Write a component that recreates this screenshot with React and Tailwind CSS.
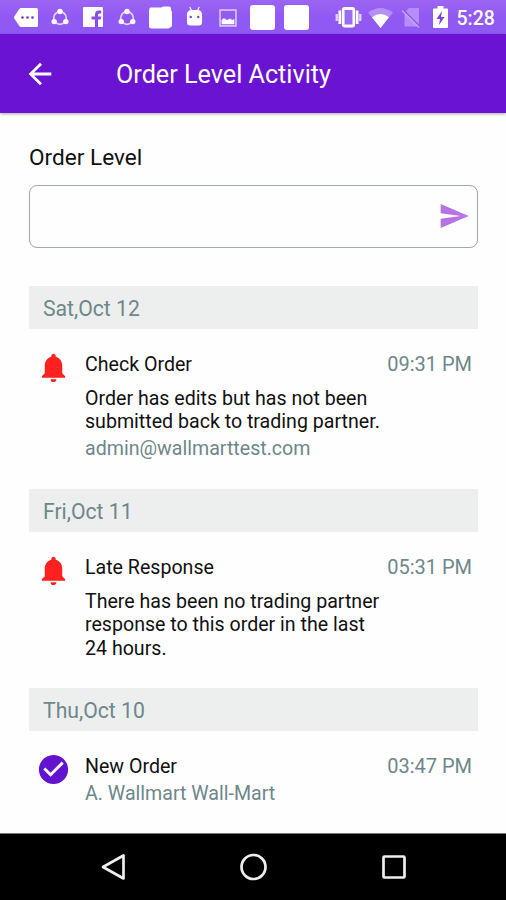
import React from 'react';
import { MdArrowBack, MdCheckCircle, MdNotifications, MdSend } from 'react-icons/md';

const days = [
  {
    date: 'Sat,Oct 12',
    height: 'h-[203px]',
    icon: 'bell',
    title: 'Check Order',
    time: '09:31 PM',
    message: ['Order has edits but has not been', 'submitted back to trading partner.'],
    author: 'admin@wallmarttest.com',
  },
  {
    date: 'Fri,Oct 11',
    height: 'h-[199px]',
    icon: 'bell',
    title: 'Late Response',
    time: '05:31 PM',
    message: ['There has been no trading partner', 'response to this order in the last', '24 hours.'],
  },
  {
    date: 'Thu,Oct 10',
    height: 'h-[145px]',
    icon: 'check',
    title: 'New Order',
    time: '03:47 PM',
    author: 'A. Wallmart Wall-Mart',
  },
];

function ShareRing({ className }) {
  return (
    <svg className={className} width="18" height="19" viewBox="0 0 18 19" fill="none">
      <circle cx="9" cy="10" r="6.3" stroke="#e3d3fc" strokeWidth="1.700" />
      <circle cx="9" cy="3.5" r="2.700" fill="#fff" />
      <circle cx="3.2" cy="13.6" r="2.700" fill="#fff" />
      <circle cx="14.8" cy="13.6" r="2.700" fill="#fff" />
    </svg>
  );
}

function StatusBar() {
  return (
    <div className="flex h-[34px] shrink-0 items-start bg-linear-to-b from-[#9c64f2] via-[#9159f3] to-[#9159f3] pt-1 text-white">
      {/* Notifications */}
      <svg className="mt-1 ml-3.5" width="24" height="19" viewBox="0 0 24 19">
        <path d="M7 0h15.500q1.500 0 1.500 1.500v16q0 1.500-1.500 1.500H7q-1 0-1.700-1L.3 10.500q-.5-1 0-2L5.300 1Q6 0 7 0z" fill="#fff" />
        <g fill="#6f35c9">
          <circle cx="8.500" cy="9.500" r="1.300" />
          <circle cx="13.500" cy="9.500" r="1.300" />
          <circle cx="18.500" cy="9.500" r="1.300" />
        </g>
      </svg>
      <ShareRing className="mt-1 ml-[13px]" />
      <svg className="mt-[3px] ml-[14px]" width="20" height="20" viewBox="0 0 20 20">
        <rect width="20" height="20" rx="1" fill="#fff" />
        <path d="M12 20v-7.500H8.500v-3H12V7.500Q12 3.500 16 3.500h2.200v3H16.500q-1.500 0-1.500 1.500v1.500h3.200l-.5 3H15V20z" fill="#8a4fe6" />
      </svg>
      <ShareRing className="mt-1 ml-[15px]" />
      <svg className="mt-0.5 ml-3" width="25" height="23" viewBox="0 0 25 23">
        <path d="M2.500 1.500h11l1.500-1h6q2 0 2 2v2q1 0 1 2v13q0 2-2 2l-1.500 1h-17q-2.500 0-2.500-2.500v-14q0-4.500 1.500-4.500z" fill="#fff" />
      </svg>
      <svg className="mt-0.5 ml-[13px]" width="17" height="20" viewBox="0 0 18 20" preserveAspectRatio="none">
        <path d="M4 1l2 4M14 1l-2 4" stroke="#fff" strokeWidth="1.300" />
        <path d="M1 9q0-5 5-5h6q5 0 5 5v7q0 3.500-3.500 3.500h-9Q1 19.500 1 16z" fill="#fff" />
        <circle cx="5" cy="11" r="1.300" fill="#7a43d4" />
        <circle cx="13" cy="11" r="1.300" fill="#7a43d4" />
      </svg>
      <svg className="mt-[5px] ml-4" width="18" height="18" viewBox="0 0 17 17">
        <rect x="1" y="1" width="15" height="15" fill="none" stroke="#d9c4fb" strokeWidth="1.600" />
        <path d="M2.500 14.500v-4l2-2 3 2 3-1.500 2 1.500 2-1v5z" fill="#fff" />
      </svg>
      <span className="mt-px ml-[13px] h-[25px] w-[25px] rounded-[3px] bg-white" />
      <span className="mt-px ml-[8.500px] h-[25px] w-[25px] rounded-[3px] bg-white" />

      {/* Device state */}
      <svg className="mt-[3px] ml-[26px]" width="27" height="21" viewBox="0 0 28 21" preserveAspectRatio="none">
        <rect x="8.500" y="1.500" width="11" height="17.500" rx="1.500" fill="#9c6bf3" stroke="#fff" strokeWidth="2.800" />
        <path d="M5 3.500v13.500M23 3.500v13.500" stroke="#fff" strokeWidth="2.800" />
        <path d="M1.800 7v7M26.200 7v7" stroke="#e3d3fc" strokeWidth="2.400" />
      </svg>
      <svg className="mt-1 ml-[6px]" width="25" height="20" viewBox="0 0 25 20">
        <path d="M12.500 20L0 4.500Q12.500-4.500 25 4.500z" fill="#b48ff7" />
        <path d="M12.500 20L4 9.300q8.500-6.600 17 0z" fill="#fff" />
      </svg>
      <svg className="mt-1 ml-[9px]" width="19" height="20" viewBox="0 0 19 20">
        <path d="M7 0h10v18.500H2.500V5z" fill="#b48ff7" />
        <path d="M1 1.500L18 18.500" stroke="#8f57e8" strokeWidth="1.600" />
        <path d="M0 2.500L17 19.500" stroke="#c5a8f8" strokeWidth="1.200" />
      </svg>
      <svg className="mt-0.5 ml-3" width="15" height="22" viewBox="0 0 15 22">
        <path d="M4.500 0h6v2.500H14q1 0 1 1V21q0 1-1 1H1q-1 0-1-1V3.500q0-1 1-1h3.500z" fill="#fff" />
        <path d="M9 5l-5.500 8H7l-1 6 5.500-8H8z" fill="#7d43db" />
      </svg>
      <span className="mt-0.5 ml-[9px] text-[19.500px] leading-[26px] font-medium">5:28</span>
    </div>
  );
}

function EventIcon({ type }) {
  if (type === 'check') {
    return <MdCheckCircle className="mt-[21px] ml-[7px] h-[35px] w-[35px] text-[#6312cf]" />;
  }
  return <MdNotifications className="mt-[21px] ml-[7px] h-[35px] w-[35px] text-[#ff2020]" />;
}

function Day({ day }) {
  return (
    <section className={day.height}>
      <h2 className="h-[43px] bg-[#edefee] pl-3.5 text-[21.200px] leading-[45px] text-[#6d878a]">{day.date}</h2>
      <div className="flex">
        <div className="w-14 shrink-0">
          <EventIcon type={day.icon} />
        </div>
        <div className="min-w-0 grow pt-[22px] pr-[6px] text-[19.600px]">
          <div className="flex justify-between leading-[27px]">
            <h3>{day.title}</h3>
            <span className="text-[20px] text-[#6d878a]">{day.time}</span>
          </div>
          {day.message && (
            <p className="pt-[9px] pb-px leading-[23.300px] whitespace-nowrap">
              {day.message.map((line) => (
                <span key={line} className="block">{line}</span>
              ))}
            </p>
          )}
          {day.author && <p className="leading-7 text-[#6d878a]">{day.author}</p>}
        </div>
      </div>
    </section>
  );
}

function NavigationBar() {
  return (
    <nav className="flex h-[67px] shrink-0 items-center border-t border-[#777] bg-black">
      <svg className="ml-[100px]" width="27" height="28" viewBox="0 0 27 28" fill="none">
        <path d="M23.500 2.500v23L3 14z" stroke="#eee" strokeWidth="2.700" strokeLinejoin="round" />
      </svg>
      <svg className="ml-[112px]" width="28" height="28" viewBox="0 0 28 28" fill="none">
        <circle cx="14.500" cy="14" r="12" stroke="#eee" strokeWidth="2.700" />
      </svg>
      <svg className="ml-[114px]" width="26" height="26" viewBox="0 0 26 26" fill="none">
        <rect x="2.500" y="2.500" width="21" height="21" rx="1" stroke="#eee" strokeWidth="2.700" />
      </svg>
    </nav>
  );
}

function App() {
  return (
    <div className="flex h-[900px] w-[506px] flex-col overflow-hidden bg-[#fefefe] font-['Roboto',sans-serif] text-[#111]">
      <StatusBar />
      <header className="flex h-[79px] shrink-0 items-center bg-[#6a13d3] text-white shadow-[0_1px_3px_rgba(0,0,0,0.35)]">
        <MdArrowBack className="ml-[23px] h-[34px] w-[34px]" />
        <h1 className="ml-[59px] pt-[3px] text-[25.200px] leading-8">Order Level Activity</h1>
      </header>
      <main className="min-h-0 grow overflow-hidden px-7 pt-[29px] pl-[29px]">
        <label className="block text-[22.600px] leading-8">Order Level</label>
        <div className="mt-[11px] flex h-[63px] items-center justify-end rounded-lg border-[1.500px] border-[#a0a8a8] pr-[7px] pb-px">
          <MdSend className="h-8 w-8 text-[#b673e6]" />
        </div>
        <div className="pt-[38px]">
          {days.map((day) => (
            <Day key={day.date} day={day} />
          ))}
        </div>
      </main>
      <NavigationBar />
    </div>
  );
}

export default App;
